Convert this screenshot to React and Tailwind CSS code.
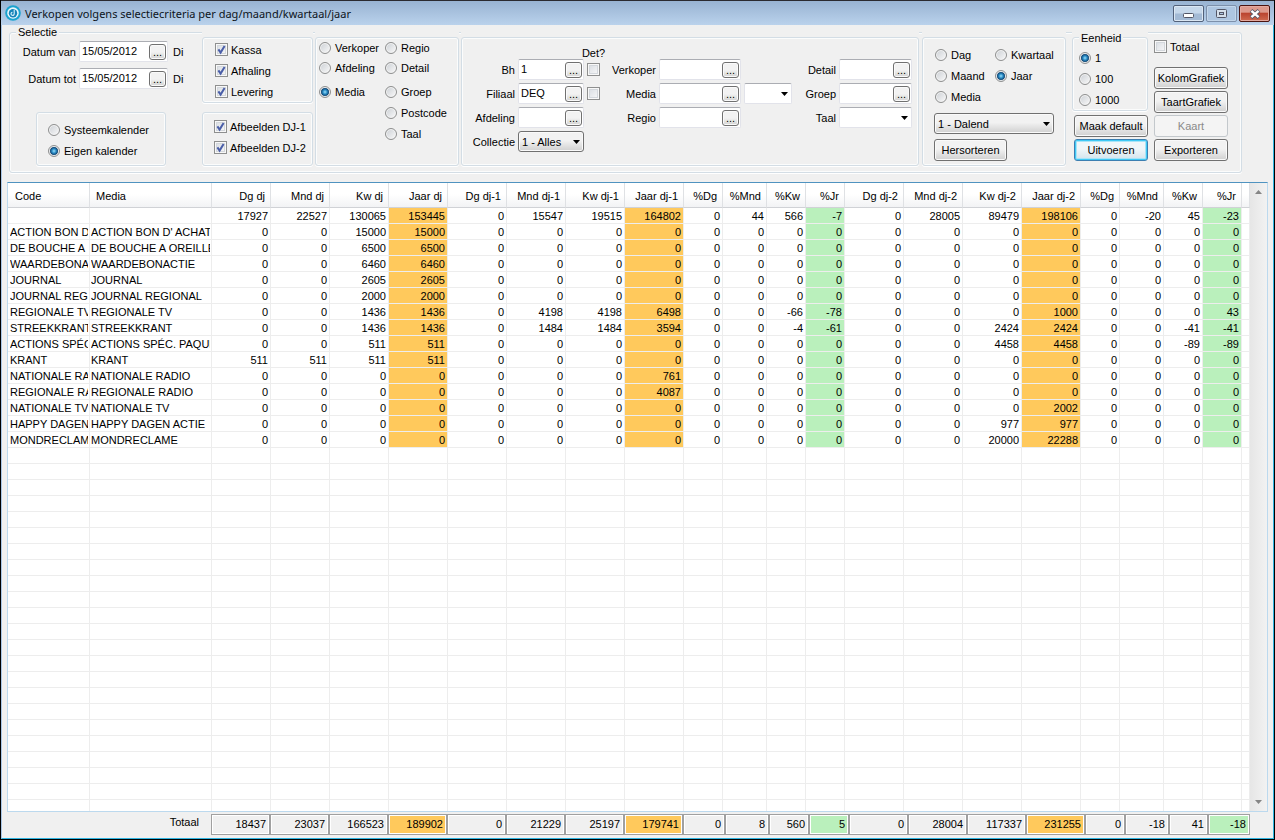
import React from "react";

const Z4 = [0, 0, 0, 0];
const rows = [
  ["", "", [17927, 22527, 130065, 153445], [0, 15547, 19515, 164802], [0, 44, 566, -7], [0, 28005, 89479, 198106], [0, -20, 45, -23]],
  ["ACTION BON D", "ACTION BON D' ACHAT", [0, 0, 15000, 15000], Z4, Z4, Z4, Z4],
  ["DE BOUCHE A", "DE BOUCHE A OREILLE", [0, 0, 6500, 6500], Z4, Z4, Z4, Z4],
  ["WAARDEBONA", "WAARDEBONACTIE", [0, 0, 6460, 6460], Z4, Z4, Z4, Z4],
  ["JOURNAL", "JOURNAL", [0, 0, 2605, 2605], Z4, Z4, Z4, Z4],
  ["JOURNAL REG", "JOURNAL REGIONAL", [0, 0, 2000, 2000], Z4, Z4, Z4, Z4],
  ["REGIONALE TV", "REGIONALE TV", [0, 0, 1436, 1436], [0, 4198, 4198, 6498], [0, 0, -66, -78], [0, 0, 0, 1000], [0, 0, 0, 43]],
  ["STREEKKRANT", "STREEKKRANT", [0, 0, 1436, 1436], [0, 1484, 1484, 3594], [0, 0, -4, -61], [0, 0, 2424, 2424], [0, 0, -41, -41]],
  ["ACTIONS SPÉC", "ACTIONS SPÉC. PAQUE", [0, 0, 511, 511], Z4, Z4, [0, 0, 4458, 4458], [0, 0, -89, -89]],
  ["KRANT", "KRANT", [511, 511, 511, 511], Z4, Z4, Z4, Z4],
  ["NATIONALE RA", "NATIONALE RADIO", Z4, [0, 0, 0, 761], Z4, Z4, Z4],
  ["REGIONALE RA", "REGIONALE RADIO", Z4, [0, 0, 0, 4087], Z4, Z4, Z4],
  ["NATIONALE TV", "NATIONALE TV", Z4, Z4, Z4, [0, 0, 0, 2002], Z4],
  ["HAPPY DAGEN", "HAPPY DAGEN ACTIE", Z4, Z4, Z4, [0, 0, 977, 977], Z4],
  ["MONDRECLAM", "MONDRECLAME", Z4, Z4, Z4, [0, 0, 20000, 22288], Z4],
];

const numericHeads = [
  "Dg dj", "Mnd dj", "Kw dj", "Jaar dj",
  "Dg dj-1", "Mnd dj-1", "Kw dj-1", "Jaar dj-1",
  "%Dg", "%Mnd", "%Kw", "%Jr",
  "Dg dj-2", "Mnd dj-2", "Kw dj-2", "Jaar dj-2",
  "%Dg", "%Mnd", "%Kw", "%Jr",
];
const W = "w-[59px]";
const P = "w-[39px]";
const M = "w-[44px]";
const colWidths = [W, W, W, W, W, W, W, W, P, M, P, P, W, W, W, W, P, M, P, P];
const ORANGE = [3, 7, 15];
const GREEN = [11, 19];

const totals = [18437, 23037, 166523, 189902, 0, 21229, 25197, 179741, 0, 8, 560, 5, 0, 28004, 117337, 231255, 0, -18, 41, -18];
const totalWidths = [W, W, W, W, W, W, W, W, "w-[42px]", M, "w-[40px]", "w-[40px]", W, W, W, W, "w-[40px]", M, P, "w-[42px]"];

function tint(i) {
  if (ORANGE.includes(i)) return "bg-[#ffc95c]";
  if (GREEN.includes(i)) return "bg-[#baf0bc]";
  return "";
}

function Check({ label, defaultChecked, ariaLabel }) {
  return (
    <label className="flex items-center gap-[3px] h-[21px]">
      <span className="grid size-[13px] shrink-0">
        <input
          type="checkbox"
          aria-label={ariaLabel}
          defaultChecked={defaultChecked}
          className="peer col-start-1 row-start-1 appearance-none size-[13px] border border-[#8e8f8f] bg-linear-to-br from-[#d6dae0] to-[#fafafa] shadow-[inset_0_0_0_1px_#f8f8f8,inset_0_0_0_2px_#d3d7dc]"
        />
        <svg viewBox="0 0 13 13" className="col-start-1 row-start-1 size-[13px] pointer-events-none hidden peer-checked:block" aria-hidden="true">
          <path d="M3.4 6.4 L5.6 9.6 L9.6 3" fill="none" stroke="#4a5ea8" strokeWidth="2" />
        </svg>
      </span>
      {label}
    </label>
  );
}

function Radio({ name, label, defaultChecked, className = "h-[21px]" }) {
  return (
    <label className={`flex items-center gap-[4px] ${className}`}>
      <input
        type="radio"
        name={name}
        defaultChecked={defaultChecked}
        className="appearance-none size-[12px] shrink-0 rounded-full border border-[#8e8f8f] bg-linear-to-br from-[#cbcfd4] to-[#fafafa] shadow-[inset_0_0_0_1px_#f4f4f4] checked:bg-[radial-gradient(circle_at_5px_5px,#9fe0fa_0px,#2b8fc9_2px,#0c3a66_4px,#f0f0f0_5px)]"
      />
      {label}
    </label>
  );
}

const fieldBox = "flex items-center h-[21px] bg-white border border-[#e2e3ea] border-t-[#abadb3] rounded-[2px]";

function Lookup({ id, value = "", className = "" }) {
  return (
    <div className={`${fieldBox} pr-px ${className}`}>
      <input id={id} defaultValue={value} className="min-w-0 flex-1 pl-[2px] pb-px bg-transparent outline-none" />
      <button
        type="button"
        aria-label="Zoeken"
        className="flex items-end justify-center w-[17px] h-[16px] shrink-0 rounded-[3px] border border-[#707070] bg-linear-to-b from-[#f2f2f2] from-50% to-[#d2d2d2] shadow-[inset_0_0_0_1px_#fafafa] leading-[14px]"
      >
        ...
      </button>
    </div>
  );
}

function Dropdown({ id, label, options, flat, className = "" }) {
  const skin = flat
    ? "bg-white border-[#e2e3ea] border-t-[#abadb3] rounded-[2px]"
    : "bg-linear-to-b from-[#f2f2f2] from-45% to-[#d0d0d0] border-[#707070] rounded-[3px] shadow-[inset_0_0_0_1px_#fafafa]";
  return (
    <div className={`grid items-center ${className}`}>
      <select id={id} aria-label={label} className={`col-start-1 row-start-1 appearance-none w-full h-[21px] border pl-[3px] pr-[14px] outline-none ${skin}`}>
        {options.map((o) => (
          <option key={o}>{o}</option>
        ))}
      </select>
      <svg viewBox="0 0 7 4" className="col-start-1 row-start-1 justify-self-end mr-[4px] w-[7px] h-[4px] pointer-events-none" aria-hidden="true">
        <path d="M0 0H7L3.5 4Z" fill="#000" />
      </svg>
    </div>
  );
}

function PushButton({ children, primary, disabled, className = "w-[74px]" }) {
  const skin = disabled
    ? "border-[#c3c8cc] bg-[#f4f4f4] text-[#8a8a8a]"
    : primary
      ? "border-[#3c7fb1] bg-linear-to-b from-[#f0f6f9] from-45% to-[#d2e3ec] shadow-[inset_0_0_0_1px_#40c9f5,inset_0_0_0_2px_#a8e4f8]"
      : "border-[#707070] bg-linear-to-b from-[#f2f2f2] from-45% to-[#d0d0d0] shadow-[inset_0_0_0_1px_#fafafa]";
  return (
    <button type="button" disabled={disabled} className={`h-[22px] rounded-[3px] border whitespace-nowrap ${skin} ${className}`}>
      {children}
    </button>
  );
}

const groupLine = "relative min-w-0 border border-[#d3dde5] rounded-[3px] shadow-[inset_0_0_0_1px_#fbfcfc,0_1px_0_#fff]";
const groupCover = "-mt-px pt-[5px] bg-[#f0f0f0] shrink-0";
const fieldLabel = "text-right whitespace-nowrap";

function TitleBar() {
  return (
    <header className="flex h-[25px] items-start border-t border-[#2a2a30] bg-linear-to-b from-[#98b3d2] to-[#bad2ec] pl-[4px] pr-[4px] shrink-0">
      <svg viewBox="0 0 16 16" className="size-[16px] mt-[4px] shrink-0" aria-hidden="true">
        <circle cx="8" cy="8" r="7.8" fill="#1ba3cf" />
        <circle cx="8" cy="8" r="5.8" fill="#e9f7fc" />
        <circle cx="8" cy="8.2" r="4.2" fill="#1583b8" />
        <path d="M9.2 4.4V8.4A1.6 1.6 0 1 1 7.4 7.2" fill="none" stroke="#d8f1fa" strokeWidth="1.1" />
      </svg>
      <h1 className="ml-[4px] mt-[4px] font-['Noto_Sans',sans-serif] text-[11px] leading-[17px] text-[#0c1420] whitespace-nowrap">
        Verkopen volgens selectiecriteria per dag/maand/kwartaal/jaar
      </h1>
      <div className="ml-auto mt-[4px] flex gap-[2px]">
        <button type="button" aria-label="Minimaliseren" className="grid place-items-center w-[31px] h-[17px] rounded-[2px] border border-[#52617a] bg-linear-to-b from-[#c5d7ea] from-45% to-[#a3bad5] to-55% shadow-[inset_0_0_0_1px_#dbe7f3]">
          <svg viewBox="0 0 11 5" className="w-[11px] h-[5px] mt-[4px]" aria-hidden="true">
            <rect x="0.5" y="0.5" width="10" height="4" rx="1" fill="#fff" stroke="#535666" />
          </svg>
        </button>
        <button type="button" aria-label="Maximaliseren" className="grid place-items-center w-[31px] h-[17px] rounded-[2px] border border-[#7d90ab] bg-[#aec6e1] shadow-[inset_0_0_0_1px_#c3d6ea]">
          <svg viewBox="0 0 11 9" className="w-[11px] h-[9px]" aria-hidden="true">
            <rect x="0.5" y="0.5" width="10" height="8" rx="1" fill="#d5dfea" stroke="#535666" />
            <rect x="3.5" y="3.5" width="4" height="2" fill="#aec6e1" stroke="#535666" />
          </svg>
        </button>
        <button type="button" aria-label="Sluiten" className="grid place-items-center w-[31px] h-[17px] rounded-[2px] border border-[#4b1410] bg-linear-to-b from-[#dd998c] from-40% via-[#bb4530] via-50% to-[#cf6a50] shadow-[inset_0_0_0_1px_#e3a99f]">
          <svg viewBox="0 0 12 10" className="w-[12px] h-[10px]" aria-hidden="true">
            <path d="M2 1.5L10 8.5M10 1.5L2 8.5" stroke="#535666" strokeWidth="4" />
            <path d="M2.4 1.8L9.6 8.2M9.6 1.8L2.4 8.2" stroke="#fff" strokeWidth="2.4" />
          </svg>
        </button>
      </div>
    </header>
  );
}

function SelectionPanel() {
  return (
    <fieldset className={`${groupLine} flex items-start self-start mt-[7px] ml-[7px] h-[141px] pr-[13px]`}>
      <legend className="absolute -top-[8px] left-[6px] px-[2px] leading-[14px] bg-[#f0f0f0]">Selectie</legend>

      <div className="w-[192px] shrink-0 pt-[8px]">
        <div className="grid grid-cols-[66px_89px_auto] gap-x-[3px] gap-y-[6px] items-center">
          <label htmlFor="van" className={fieldLabel}>Datum van</label>
          <Lookup id="van" value="15/05/2012" />
          <span className="pl-[2px]">Di</span>
          <label htmlFor="tot" className={fieldLabel}>Datum tot</label>
          <Lookup id="tot" value="15/05/2012" />
          <span className="pl-[2px]">Di</span>
        </div>
        <div role="radiogroup" aria-label="Kalender" className={`${groupLine} ml-[26px] mt-[23px] w-[130px] h-[54px] pl-[11px] pt-[6px]`}>
          <Radio name="kalender" label="Systeemkalender" />
          <Radio name="kalender" label="Eigen kalender" defaultChecked />
        </div>
      </div>

      <div className={`${groupCover} mr-[2px]`}>
        <div className={`${groupLine} w-[111px] h-[66px] pl-[12px] pt-px`}>
          <Check label="Kassa" defaultChecked />
          <Check label="Afhaling" defaultChecked />
          <Check label="Levering" defaultChecked />
        </div>
        <div className={`${groupLine} mt-[9px] w-[111px] h-[54px] pl-[11px] pt-[3px]`}>
          <Check label="Afbeelden DJ-1" defaultChecked />
          <Check label="Afbeelden DJ-2" defaultChecked />
        </div>
      </div>

      <div className={`${groupCover} mr-[2px]`}>
        <div role="radiogroup" aria-label="Groepering" className={`${groupLine} w-[144px] h-[129px] pl-[3px]`}>
          <div className="grid grid-cols-[66px_auto]">
            <Radio name="groepering" label="Verkoper" className="h-[20px]" />
            <Radio name="groepering" label="Regio" className="h-[20px]" />
            <Radio name="groepering" label="Afdeling" className="h-[20px]" />
            <Radio name="groepering" label="Detail" className="h-[20px]" />
          </div>
          <div className="grid grid-cols-[66px_auto] mt-[3px]">
            <Radio name="groepering" label="Media" defaultChecked />
            <Radio name="groepering" label="Groep" />
            <span />
            <Radio name="groepering" label="Postcode" />
            <span />
            <Radio name="groepering" label="Taal" />
          </div>
        </div>
      </div>

      <div className={`${groupCover} mr-[3px]`}>
        <div className={`${groupLine} grid w-[458px] h-[129px] content-start items-center gap-[3px] grid-cols-[53px_66px_13px_53px_82px_48px_41px_73px] grid-rows-[18px_21px_21px_21px_21px]`}>
          <span className="col-start-3 self-end justify-self-center leading-[6px]">Det?</span>

          <label htmlFor="bh" className={`${fieldLabel} col-start-1`}>Bh</label>
          <Lookup id="bh" value="1" />
          <Check ariaLabel="Bh detail" />
          <label htmlFor="verkoper" className={fieldLabel}>Verkoper</label>
          <Lookup id="verkoper" />
          <label htmlFor="detail" className={`${fieldLabel} col-start-7`}>Detail</label>
          <Lookup id="detail" />

          <label htmlFor="filiaal" className={fieldLabel}>Filiaal</label>
          <Lookup id="filiaal" value="DEQ" />
          <Check ariaLabel="Filiaal detail" />
          <label htmlFor="media" className={fieldLabel}>Media</label>
          <Lookup id="media" />
          <Dropdown id="mediatype" label="Mediatype" options={[""]} flat />
          <label htmlFor="groep" className={fieldLabel}>Groep</label>
          <Lookup id="groep" />

          <label htmlFor="afdeling" className={fieldLabel}>Afdeling</label>
          <Lookup id="afdeling" />
          <label htmlFor="regio" className={`${fieldLabel} col-start-4`}>Regio</label>
          <Lookup id="regio" />
          <label htmlFor="taal" className={`${fieldLabel} col-start-7`}>Taal</label>
          <Dropdown id="taal" options={[""]} flat />

          <label htmlFor="collectie" className={fieldLabel}>Collectie</label>
          <Dropdown id="collectie" options={["1 - Alles"]} />
        </div>
      </div>

      <div className={`${groupCover} mr-[6px]`}>
        <div className={`${groupLine} w-[144px] h-[129px] pl-[11px] pt-[6px]`}>
          <div role="radiogroup" aria-label="Periode" className="grid grid-cols-[60px_auto] pl-px">
            <Radio name="periode" label="Dag" />
            <Radio name="periode" label="Kwartaal" />
            <Radio name="periode" label="Maand" />
            <Radio name="periode" label="Jaar" defaultChecked />
            <Radio name="periode" label="Media" />
          </div>
          <Dropdown id="volgorde" label="Volgorde" options={["1 - Dalend"]} className="mt-[6px] mb-[5px] w-[120px]" />
          <PushButton className="w-[73px]">Hersorteren</PushButton>
        </div>
      </div>

      <div className={`${groupCover} mr-[6px] flex flex-col items-end gap-[2px]`}>
        <fieldset className={`${groupLine} w-[76px] h-[74px] mb-[2px] pl-[6px] pt-[9px]`}>
          <legend className="absolute -top-[6px] left-[6px] px-[2px] leading-[13px] bg-[#f0f0f0]">Eenheid</legend>
          <Radio name="eenheid" label="1" defaultChecked />
          <Radio name="eenheid" label="100" />
          <Radio name="eenheid" label="1000" />
        </fieldset>
        <PushButton>Maak default</PushButton>
        <PushButton primary>Uitvoeren</PushButton>
      </div>

      <div className="flex flex-col gap-[2px] pt-[3px] shrink-0">
        <div className="mb-[8px]">
          <Check label="Totaal" />
        </div>
        <PushButton>KolomGrafiek</PushButton>
        <PushButton>TaartGrafiek</PushButton>
        <PushButton disabled>Kaart</PushButton>
        <PushButton>Exporteren</PushButton>
      </div>
    </fieldset>
  );
}

const cell = "h-[16px] p-0 pt-[2px] border-r border-b border-[#ededed] whitespace-nowrap overflow-hidden leading-[13px]";
const head = "h-[25px] p-0 pt-[2px] font-normal border-r border-[#dfe1e4] border-b border-b-[#d0d2d6] whitespace-nowrap";

function ResultGrid() {
  return (
    <div className="flex flex-1 min-h-0 mt-[9px] ml-[5px] mr-[5px] border border-[#bcd9ee] border-t-[#4f93c0] bg-white">
      <div className="flex-1 min-w-0 overflow-hidden">
        <table className="w-full table-fixed border-separate border-spacing-0">
          <colgroup>
            <col className="w-[82px]" />
            <col className="w-[122px]" />
            {colWidths.map((w, i) => (
              <col key={i} className={w} />
            ))}
            <col />
          </colgroup>
          <thead>
            <tr className="bg-linear-to-b from-white from-45% to-[#f1f2f4]">
              <th className={`${head} text-left pl-[7px]`}>Code</th>
              <th className={`${head} text-left pl-[6px]`}>Media</th>
              {numericHeads.map((h, i) => (
                <th key={i} className={`${head} text-right pr-[5px]`}>{h}</th>
              ))}
              <th className={head} />
            </tr>
          </thead>
          <tbody>
            {rows.map(([code, media, ...groups]) => (
              <tr key={media}>
                <td className={`${cell} pl-[2px]`}>
                  <div className="overflow-hidden mr-px">{code}</div>
                </td>
                <td className={`${cell} pl-px`}>
                  <div className="overflow-hidden mr-px">{media}</div>
                </td>
                {groups.flat().map((v, i) => (
                  <td key={i} className={`${cell} text-right pr-[2px] ${tint(i)}`}>{v}</td>
                ))}
                <td className={cell} />
              </tr>
            ))}
            {Array.from({ length: 23 }, (_, r) => (
              <tr key={r}>
                {Array.from({ length: 23 }, (_, c) => (
                  <td key={c} className={cell} />
                ))}
              </tr>
            ))}
          </tbody>
        </table>
      </div>
      <div className="flex flex-col justify-between items-center w-[17px] shrink-0 py-[7px] bg-linear-to-r from-[#e6e6e6] to-[#f2f2f2]">
        <svg viewBox="0 0 7 4" className="w-[7px] h-[4px]" aria-hidden="true">
          <path d="M0 4H7L3.5 0Z" fill="#858585" />
        </svg>
        <svg viewBox="0 0 7 4" className="w-[7px] h-[4px]" aria-hidden="true">
          <path d="M0 0H7L3.5 4Z" fill="#858585" />
        </svg>
      </div>
    </div>
  );
}

function TotalsBar() {
  return (
    <div className="flex shrink-0 pt-[2px] pb-[3px]">
      <span className="w-[209px] shrink-0 pr-[12px] text-right leading-[17px]">Totaal</span>
      {totals.map((v, i) => (
        <output
          key={i}
          className={`${totalWidths[i]} h-[21px] shrink-0 border border-[#a0a0a0] shadow-[inset_0_0_0_1px_#fff] pr-[3px] text-right leading-[18px] ${tint(i)}`}
        >
          {v}
        </output>
      ))}
    </div>
  );
}

export default function App() {
  return (
    <div className="flex h-screen flex-col overflow-hidden border-x border-b border-black bg-[#f0f0f0] font-['Liberation_Sans',Arial,sans-serif] text-[11px] leading-[14px] text-black">
      <TitleBar />
      <main className="flex flex-1 min-h-0 flex-col border-l border-r border-b border-l-[#a9c6e6] border-r-[#2fb4e0] border-b-[#2fb4e0]">
        <SelectionPanel />
        <ResultGrid />
        <TotalsBar />
      </main>
    </div>
  );
}
